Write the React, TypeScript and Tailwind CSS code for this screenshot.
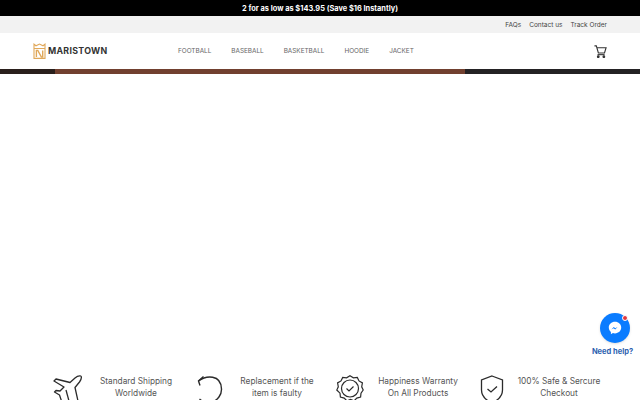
const navItems = ["FOOTBALL", "BASEBALL", "BASKETBALL", "HOODIE", "JACKET"];

function Logo() {
  return (
    <svg width="13" height="16" viewBox="0 0 13 16" fill="none" stroke="#e0a85a" strokeWidth="1.1">
      <path d="M1 5V1.200l2 1.600L6.500 1 10 2.800l2-1.600V5" />
      <path d="M1 5.500h11V15.400H1z" />
      <path d="M3.400 14V7.400h1.400l3.600 6.600h1.300V7.400" strokeWidth="1.400" />
    </svg>
  );
}

function CartIcon() {
  return (
    <svg width="13" height="13" viewBox="0 0 14 14" fill="none" stroke="#333" strokeWidth="1.200">
      <path d="M0.500 1h2l2.200 7.600h6.600L13 3H3.200" />
      <path d="M3.800 10.400h7.600" />
      <circle cx="4.600" cy="12.600" r="0.900" fill="#333" />
      <circle cx="10.600" cy="12.600" r="0.900" fill="#333" />
    </svg>
  );
}

function PlaneIcon() {
  return (
    <svg width="30" height="26" viewBox="0 0 30 26" fill="none" stroke="#2b2b2b" strokeWidth="1.300" strokeLinejoin="round">
      <path d="M28 1c-2-.6-4 .2-6 2L17 7.500 3 4 1 6l10 6-4 4-4-.5L1.500 17l5 3 2 6" />
      <path d="M28 1c1 2 0 4-1.500 6L22 12.500 25 26" />
      <path d="M13 15l3 11" />
    </svg>
  );
}

function ReturnIcon() {
  return (
    <svg width="26" height="26" viewBox="0 0 26 26" fill="none" stroke="#2b2b2b" strokeWidth="1.400">
      <path d="M1.500 6C9 .5 24-1 24.500 14c.2 6-4 11-9 13" />
      <path d="M6.500 1.500L1.500 6 3 10.500" />
      <path d="M2.500 24l2.500 2" />
    </svg>
  );
}

function BadgeIcon() {
  return (
    <svg width="28" height="26" viewBox="0 0 28 26" fill="none" stroke="#2b2b2b" strokeWidth="1.200">
      <path d="M14 .8l3.400 2 3.900-.4 1.700 3.500 3.400 2-.7 3.900 1.500 3.200-2.200 3.200-.4 3.900-3.800 1-2.800 2.800-3.500-1.500-3.500 1.500-2.800-2.800-3.800-1-.4-3.900L.8 15l1.500-3.200-.7-3.900 3.400-2 1.700-3.500 3.900.4z" />
      <circle cx="14" cy="13.500" r="8.500" />
      <path d="M10.500 13.500l2.500 2.500 4.500-4.500" />
    </svg>
  );
}

function ShieldIcon() {
  return (
    <svg width="24" height="26" viewBox="0 0 24 26" fill="none" stroke="#2b2b2b" strokeWidth="1.300">
      <path d="M12 1l10.500 4v10c0 6-4 10-10.500 13C5.500 25 1.500 21 1.500 15V5z" />
      <path d="M7.500 14l3.500 3 6-5.500" />
    </svg>
  );
}

const features = [
  { icon: <PlaneIcon />, lines: ["Standard Shipping", "Worldwide"], pad: "pl-[8px]" },
  { icon: <ReturnIcon />, lines: ["Replacement if the", "item is faulty"], pad: "pl-[11px]" },
  { icon: <BadgeIcon />, lines: ["Happiness Warranty", "On All Products"], pad: "pl-[9px]" },
  { icon: <ShieldIcon />, lines: ["100% Safe & Sercure", "Checkout"], pad: "pl-[12px]" },
];

export default function App() {
  return (
    <div className="h-[400px] w-[640px] overflow-hidden bg-white font-['Inter',sans-serif] relative">
      <div className="h-4 bg-black flex items-center justify-center pt-px text-[7.400px] font-bold text-white">
        2 for as low as $143.95 (Save $16 Instantly)
      </div>

      <div className="h-[17px] bg-[#f2f2f2] flex items-center justify-end gap-2 pr-[33px] pt-[2px] text-[6.500px] text-[#444]">
        <span>FAQs</span>
        <span>Contact us</span>
        <span>Track Order</span>
      </div>

      <div className="h-9 flex items-center pl-[33px] pr-[33px]">
        <div className="flex w-[145px] items-center gap-[2px]">
          <Logo />
          <span className="text-[8.800px] font-bold tracking-[0.3px] text-[#333]">MARISTOWN</span>
        </div>
        <nav className="flex flex-1 gap-5 pt-[2px] text-[6.400px] text-[#666]">
          {navItems.map((item) => (
            <span key={item}>{item}</span>
          ))}
        </nav>
        <CartIcon />
      </div>

      <div className="flex h-[5px]">
        <div className="w-[55px] bg-[#2a1f1c]" />
        <div className="w-[410px] bg-[#71402f]" />
        <div className="flex-1 bg-[#242224]" />
      </div>

      <div className="h-[301px]" />

      <div className="grid w-[564px] grid-cols-4 ml-[45px]">
        {features.map((f) => (
          <div key={f.lines[0]} className="flex items-start">
            <div className={`w-[41px] shrink-0 ${f.pad}`}>{f.icon}</div>
            <div className="w-[100px] text-center text-[8.300px] leading-[12px] text-[#555]">
              {f.lines.map((line) => (
                <div key={line} className="whitespace-nowrap">{line}</div>
              ))}
            </div>
          </div>
        ))}
      </div>

      <div className="absolute left-[592px] top-[313px] flex w-[41px] flex-col items-center">
        <div className="relative flex h-[30px] w-[30px] translate-x-[2px] items-center justify-center rounded-full bg-[#0a7cff] shadow">
          <svg width="14" height="14" viewBox="0 0 14 14">
            <path d="M7 .8C3.400.8.800 3.300.800 6.600c0 1.800.8 3.300 2.100 4.400v2.200l2-1.100c.6.2 1.300.3 2.100.3 3.600 0 6.200-2.500 6.200-5.800S10.600.8 7 .8z" fill="#fff" />
            <path d="M3.400 8.500l2.400-2.600 1.500 1.300 2.300-1.300-2.400 2.600-1.500-1.300z" fill="#0a7cff" />
          </svg>
          <span className="absolute right-[2px] top-[2px] h-[6px] w-[6px] rounded-full border border-white bg-[#e0383e]" />
        </div>
        <span className="mt-[3px] whitespace-nowrap text-[7.500px] font-bold text-[#2d5fb0]">Need help?</span>
      </div>
    </div>
  );
}
